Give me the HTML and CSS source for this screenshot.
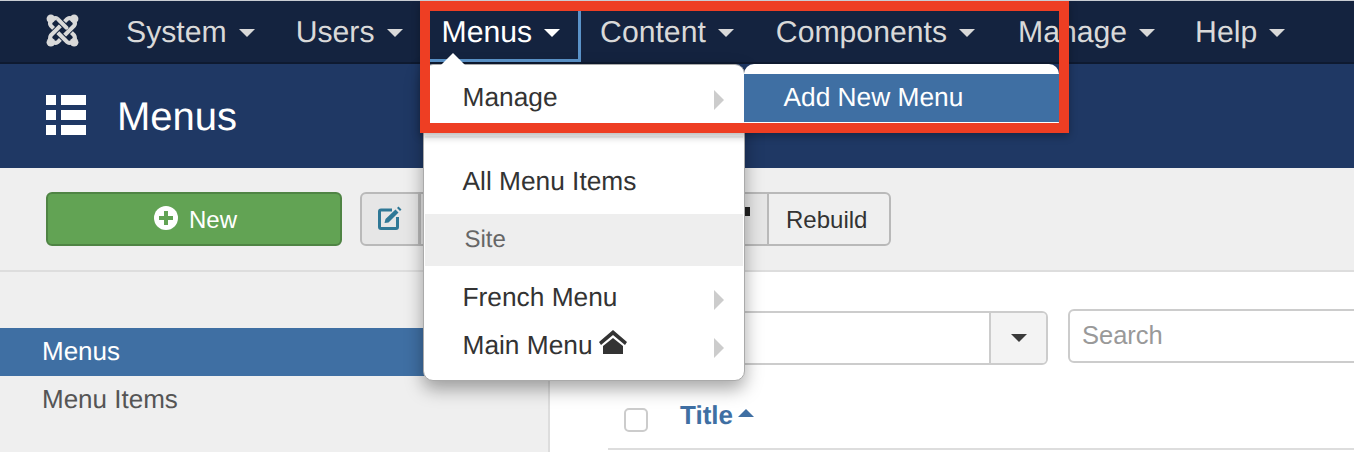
FILE: index.html
```html
<!DOCTYPE html>
<html lang="en">
<head>
    <meta charset="UTF-8">
    <title>Menus</title>
    <link rel="stylesheet" href="styles.css">
</head>
<body>
<div class="page">
    <nav class="topnav">
        <a class="brand" href="#">
            <svg class="brand-icon" viewBox="0 0 34 34">
                <g fill="#d9d9d9">
                    <circle cx="5" cy="5" r="4.400"/>
                    <circle cx="29" cy="5" r="4.400"/>
                    <circle cx="5" cy="29" r="4.400"/>
                    <circle cx="29" cy="29" r="4.400"/>
                </g>
                <g fill="none" stroke-linecap="round">
                    <path stroke="#14233f" stroke-width="6.200" d="M12 5 L29 22"/>
                    <path stroke="#d9d9d9" stroke-width="4.200" d="M6 6 Q9 3 12 5 L29 22 Q31 25 28 28"/>
                    <path stroke="#14233f" stroke-width="6.200" d="M29 12 L12 29"/>
                    <path stroke="#d9d9d9" stroke-width="4.200" d="M28 6 Q31 9 29 12 L12 29 Q9 31 6 28"/>
                    <path stroke="#14233f" stroke-width="6.200" d="M22 29 L5 12"/>
                    <path stroke="#d9d9d9" stroke-width="4.200" d="M28 28 Q25 31 22 29 L5 12 Q3 9 6 6"/>
                    <path stroke="#14233f" stroke-width="6.200" d="M5 22 L22 5"/>
                    <path stroke="#d9d9d9" stroke-width="4.200" d="M6 28 Q3 25 5 22 L22 5 Q25 3 28 6"/>
                    <path stroke="#14233f" stroke-width="6.200" d="M14 7 L20 13"/>
                    <path stroke="#d9d9d9" stroke-width="4.200" d="M13 6 L21 14"/>
                </g>
            </svg>
        </a>
        <ul class="nav-list">
            <li class="nav-item nav-system"><a href="#">System<span class="caret"></span></a></li>
            <li class="nav-item"><a href="#">Users<span class="caret"></span></a></li>
            <li class="nav-item active">
                <a href="#">Menus<span class="caret"></span></a>
                <div class="dropdown">
                    <div class="dropdown-row has-sub">Manage
                        <div class="submenu">
                            <div class="submenu-row">Add New Menu</div>
                        </div>
                    </div>
                    <div class="divider"></div>
                    <div class="dropdown-row">All Menu Items</div>
                    <div class="dropdown-heading">Site</div>
                    <div class="dropdown-row has-sub">French Menu</div>
                    <div class="dropdown-row has-sub">Main Menu
                        <svg class="home-icon" viewBox="0 0 28 24">
                            <path fill="#333" d="M14 0 L28 12 L26 15 L14 5 L2 15 L0 12 Z"/>
                            <path fill="#333" d="M14 8 L24 16 V24 H4 V16 Z"/>
                        </svg>
                    </div>
                </div>
            </li>
            <li class="nav-item"><a href="#">Content<span class="caret"></span></a></li>
            <li class="nav-item nav-components"><a href="#">Components<span class="caret"></span></a></li>
            <li class="nav-item nav-manage"><a href="#">Manage<span class="caret"></span></a></li>
            <li class="nav-item"><a href="#">Help<span class="caret"></span></a></li>
        </ul>
    </nav>

    <header class="title-bar">
        <svg class="list-icon" viewBox="0 0 40 40" fill="#fff">
            <rect x="0" y="0" width="10" height="10"/>
            <rect x="15" y="0" width="25" height="10"/>
            <rect x="0" y="15" width="10" height="10"/>
            <rect x="15" y="15" width="25" height="10"/>
            <rect x="0" y="30" width="10" height="10"/>
            <rect x="15" y="30" width="25" height="10"/>
        </svg>
        <h1>Menus</h1>
    </header>

    <div class="toolbar">
        <button class="btn btn-new">
            <svg class="plus-icon" viewBox="0 0 24 24">
                <circle cx="12" cy="12" r="12" fill="#fff"/>
                <path fill="#62a354" d="M10 5 H14 V10 H19 V14 H14 V19 H10 V14 H5 V10 H10 Z"/>
            </svg>
            New
        </button>
        <div class="btn-group">
            <button class="btn btn-edit">
                <svg class="edit-icon" viewBox="0 0 24 24">
                    <path fill="none" stroke="#2f7896" stroke-width="3" d="M14 4 H3 Q1.500 4 1.500 5.500 V21 Q1.500 22.500 3 22.500 H18 Q19.500 22.500 19.500 21 V11"/>
                    <path fill="#2f7896" d="M17.500 3.500 L20.500 6.500 L10.500 16.500 L6.500 17 L7.500 13 Z M19 2 L20.500 0.500 L23.500 3.500 L22 5 Z"/>
                </svg>
            </button>
            <button class="btn btn-middle"><span class="hidden-glyph"></span></button>
            <button class="btn btn-rebuild">Rebuild</button>
        </div>
    </div>

    <div class="content">
        <aside class="sidebar">
            <a class="side-link selected" href="#">Menus</a>
            <a class="side-link" href="#">Menu Items</a>
        </aside>
        <main class="main">
            <div class="filters">
                <div class="select-box">
                    <span class="select-text"></span>
                    <span class="select-arrow"><span class="select-caret"></span></span>
                </div>
                <input class="search" type="text" placeholder="Search">
            </div>
            <div class="table-head">
                <span class="checkbox"></span>
                <a class="sort-title" href="#">Title<span class="caret-up"></span></a>
            </div>
        </main>
    </div>

    <div class="highlight"></div>
</div>
</body>
</html>
```
FILE: styles.css
```css
* {
    box-sizing: border-box;
}
body {
    margin: 0;
    font-family: "Liberation Sans", Arial, sans-serif;
    background-color: #fff;
    color: #333;
    text-rendering: geometricPrecision;
}
a {
    text-decoration: none;
    color: inherit;
}

.page {
    position: relative;
    width: 1354px;
    height: 452px;
    overflow: hidden;
    border-top: 1px solid #c9cdd3;
}

/* top navigation */
.topnav {
    display: flex;
    align-items: stretch;
    height: 63px;
    background-color: #14233f;
    border-bottom: 2px solid #0e1a30;
    padding-left: 46px;
}
.brand {
    display: flex;
    align-items: center;
    width: 59px;
    padding-bottom: 2px;
}
.brand-icon {
    width: 33px;
    height: 33px;
}
.nav-list {
    display: flex;
    list-style: none;
    margin: 0;
    padding: 0;
}
.nav-item {
    position: relative;
    display: flex;
    align-items: center;
    padding: 0 21px;
    font-size: 30.200px;
    color: #d9d9d9;
}
.nav-system {
    margin-right: -1px;
}
.nav-components {
    margin-right: 1px;
}
.nav-manage {
    margin-right: -2px;
}
.nav-item a {
    display: flex;
    align-items: center;
    padding-top: 2px;
}
.caret {
    width: 0;
    height: 0;
    margin-left: 12px;
    margin-top: 1px;
    border-left: 8px solid transparent;
    border-right: 8px solid transparent;
    border-top: 8px solid currentColor;
}
.nav-item.active {
    margin-left: -3px;
    margin-right: -2px;
    color: #fff;
    box-shadow: inset -3px -3px 0 #5b93c9;
}

/* menus dropdown */
.dropdown {
    position: absolute;
    top: 63px;
    left: 2px;
    width: 322px;
    height: 317px;
    padding: 9px 0 0;
    background-color: #fff;
    border: 1px solid #aaa;
    border-radius: 10px;
    box-shadow: 0 8px 18px rgba(0, 0, 0, 0.35);
    font-size: 26.300px;
    color: #333;
    z-index: 5;
}
.dropdown::before {
    content: "";
    position: absolute;
    top: -12px;
    left: 17px;
    border-left: 12px solid transparent;
    border-right: 12px solid transparent;
    border-bottom: 12px solid #fff;
}
.dropdown-row {
    position: relative;
    height: 48px;
    line-height: 47px;
    padding-left: 39px;
}
.dropdown-row.has-sub::after {
    content: "";
    position: absolute;
    top: 16px;
    right: 20px;
    border-top: 10px solid transparent;
    border-bottom: 10px solid transparent;
    border-left: 10px solid #ccc;
}
.divider {
    height: 2px;
    margin: 14px 1px 20px;
    background-color: #f4f4f4;
}
.dropdown-heading {
    height: 52px;
    line-height: 52px;
    margin: 8px 1px 8px;
    padding-left: 40px;
    background-color: #eee;
    font-size: 24px;
    color: #666;
}
.home-icon {
    width: 28px;
    height: 24px;
    margin-left: -1px;
    vertical-align: 0;
}
.submenu {
    position: absolute;
    top: -10px;
    left: 320px;
    width: 315px;
    height: 68px;
    padding-top: 10px;
    background-color: #fff;
    border-radius: 10px;
}
.submenu-row {
    height: 48px;
    line-height: 47px;
    padding-left: 40px;
    background-color: #3f6fa3;
    color: #fff;
}

/* page title */
.title-bar {
    display: flex;
    align-items: center;
    gap: 31px;
    height: 104px;
    padding-left: 46px;
    background-color: #1f3864;
    color: #fff;
}
.list-icon {
    width: 40px;
    height: 40px;
    margin-bottom: 3px;
}
.title-bar h1 {
    margin: 2px 0 0;
    font-size: 40px;
    font-weight: normal;
}

/* toolbar */
.toolbar {
    display: flex;
    align-items: flex-start;
    gap: 18px;
    height: 104px;
    padding: 24px 0 0 46px;
    background-color: #efefef;
    border-bottom: 2px solid #ddd;
}
.btn {
    height: 54px;
    font-family: inherit;
    font-size: 24px;
    color: #333;
    background-color: #efefef;
    border: 2px solid #b9b9b9;
}
.btn-new {
    display: flex;
    align-items: center;
    justify-content: center;
    gap: 11px;
    width: 296px;
    padding: 2px 0 0 3px;
    background-color: #62a354;
    border-color: #4f8444;
    border-radius: 6px;
    color: #fff;
}
.plus-icon {
    width: 24px;
    height: 24px;
    margin-bottom: 5px;
}
.btn-group {
    display: flex;
}
.btn-edit {
    display: flex;
    align-items: center;
    justify-content: center;
    width: 60px;
    padding: 0 0 2px;
    background-color: #e6e6e6;
    border-radius: 6px 0 0 6px;
}
.edit-icon {
    width: 24px;
    height: 24px;
}
.btn-middle {
    display: flex;
    justify-content: flex-end;
    align-items: flex-start;
    width: 350px;
    padding: 13px 17px 0 0;
    margin-left: -1px;
    background-color: #e6e6e6;
}
.hidden-glyph {
    width: 6px;
    height: 9px;
    background-color: #222;
}
.btn-rebuild {
    width: 124px;
    margin-left: -2px;
    padding: 2px 0 0 17px;
    text-align: left;
    border-radius: 0 6px 6px 0;
}

/* sidebar and list */
.content {
    display: flex;
    height: 180px;
}
.sidebar {
    flex-shrink: 0;
    width: 550px;
    padding-top: 56px;
    background-color: #efefef;
    border-right: 2px solid #ddd;
    font-size: 26px;
    color: #555;
}
.side-link {
    display: block;
    height: 48px;
    line-height: 47px;
    padding-left: 42px;
}
.side-link.selected {
    background-color: #3f6fa3;
    color: #fff;
}
.main {
    flex: 1;
    min-width: 0;
    padding: 37px 0 0 58px;
}
.filters {
    display: flex;
    align-items: flex-start;
    gap: 20px;
}
.select-box {
    display: flex;
    flex-shrink: 0;
    width: 440px;
    height: 54px;
    margin-top: 2px;
    border: 2px solid #ccc;
    border-radius: 0 6px 6px 0;
}
.select-text {
    flex: 1;
}
.select-arrow {
    display: flex;
    align-items: center;
    justify-content: center;
    width: 57px;
    background-color: #f3f3f3;
    border-left: 2px solid #ccc;
    border-radius: 0 4px 4px 0;
}
.select-caret {
    border-left: 8px solid transparent;
    border-right: 8px solid transparent;
    border-top: 8px solid #3a3a3a;
}
.search {
    flex-shrink: 0;
    width: 300px;
    height: 54px;
    padding: 0 12px 2px;
    font-family: inherit;
    font-size: 25.500px;
    border: 2px solid #ccc;
    border-radius: 6px 0 0 6px;
    outline: none;
}
.search::placeholder {
    color: #999;
}
.table-head {
    display: flex;
    align-items: flex-start;
    height: 85px;
    padding: 35px 0 0 16px;
    border-bottom: 2px solid #ddd;
}
.checkbox {
    width: 24px;
    height: 24px;
    margin-top: 8px;
    background-color: #fff;
    border: 2px solid #ccc;
    border-radius: 5px;
}
.sort-title {
    display: flex;
    align-items: center;
    height: 30px;
    margin-left: 32px;
    font-size: 26px;
    font-weight: bold;
    color: #3f6fa3;
}
.caret-up {
    margin: 0 0 4px 5px;
    border-left: 8px solid transparent;
    border-right: 8px solid transparent;
    border-bottom: 8px solid #3f6fa3;
}

/* red annotation box over the screenshot */
.highlight {
    position: absolute;
    top: 0;
    left: 420px;
    width: 649px;
    height: 132px;
    border: 10px solid #ee3e23;
    box-shadow: 0 3px 8px rgba(0, 0, 0, 0.3);
    z-index: 10;
}
```
